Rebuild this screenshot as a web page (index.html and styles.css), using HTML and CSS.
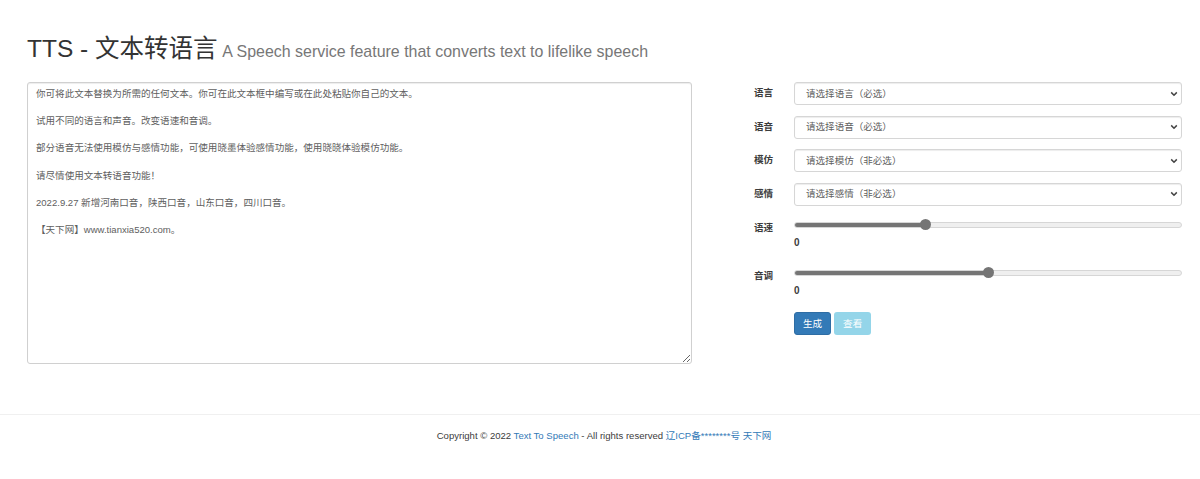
FILE: index.html
```html
<!DOCTYPE html>
<html lang="zh-CN">
<head>
<meta charset="utf-8">
<title>TTS - 文本转语言</title>
<link rel="stylesheet" href="styles.css">
</head>
<body>
<main class="page">
  <h1 class="title">TTS - 文本转语言 <small class="subtitle">A Speech service feature that converts text to lifelike speech</small></h1>
  <div class="columns">
    <textarea class="text-input">你可将此文本替换为所需的任何文本。你可在此文本框中编写或在此处粘贴你自己的文本。

试用不同的语言和声音。改变语速和音调。

部分语音无法使用模仿与感情功能，可使用晓墨体验感情功能，使用晓晓体验模仿功能。

请尽情使用文本转语音功能！

2022.9.27 新增河南口音，陕西口音，山东口音，四川口音。

【天下网】www.tianxia520.com。</textarea>
    <form class="controls">
      <label class="field-label">语言</label>
      <select class="field-select"><option>请选择语言（必选）</option></select>
      <label class="field-label">语音</label>
      <select class="field-select"><option>请选择语音（必选）</option></select>
      <label class="field-label">模仿</label>
      <select class="field-select"><option>请选择模仿（非必选）</option></select>
      <label class="field-label">感情</label>
      <select class="field-select"><option>请选择感情（非必选）</option></select>
      <label class="field-label slider-label">语速</label>
      <div class="slider-cell">
        <input class="slider" type="range" min="-500" max="1000" value="0" style="--fill:33.3%">
        <b class="slider-value">0</b>
      </div>
      <label class="field-label slider-label">音调</label>
      <div class="slider-cell">
        <input class="slider" type="range" min="-500" max="500" value="0" style="--fill:50%">
        <b class="slider-value">0</b>
      </div>
      <div class="actions">
        <button class="btn btn-primary" type="button">生成</button>
        <button class="btn btn-info" type="button">查看</button>
      </div>
    </form>
  </div>
</main>
<footer class="footer">
  <p class="copyright">Copyright © 2022 <a href="#">Text To Speech</a> - All rights reserved <a href="#">辽ICP备********号</a> <a href="#">天下网</a></p>
</footer>
</body>
</html>
```

FILE: styles.css
```css
* { box-sizing: border-box; }
html, body { margin: 0; height: 100%; }
body {
  background: #fff;
  color: #3c3c3c;
  font-family: "Liberation Sans", "Noto Sans CJK SC", sans-serif;
  font-size: 9.55px;
  line-height: 13.6px;
  overflow: hidden;
}
.page { padding: 35px 18px 0 27px; }
.title {
  margin: 0 0 16px;
  font-size: 24.5px;
  line-height: 28px;
  font-weight: 400;
  color: #333;
}
.subtitle { margin-left: -2px; font-size: 15.96px; color: #777; font-weight: 400; }
.columns {
  display: grid;
  grid-template-columns: 665px 1fr;
  align-items: start;
}
.text-input {
  display: block;
  width: 665px;
  height: 282px;
  padding: 4px 8px;
  border: 1px solid #d0d0d0;
  border-radius: 3px;
  box-shadow: inset 0 1px 1px rgba(0,0,0,.075);
  color: #606060;
  font: inherit;
  line-height: 13.6px;
  resize: vertical;
  outline: none;
}
.controls {
  display: grid;
  grid-template-columns: 81px 388px;
  column-gap: 21px;
  row-gap: 10.5px;
  align-items: start;
}
.field-label {
  text-align: right;
  font-weight: 700;
  padding-top: 4px;
  line-height: 13.6px;
}
.slider-label { padding-top: 4.5px; }
.field-select {
  -webkit-appearance: none;
  appearance: none;
  display: block;
  width: 100%;
  height: 23px;
  padding: 0 11px;
  border: 1px solid #d6d6d6;
  border-radius: 3px;
  background: #fff url("data:image/svg+xml,%3Csvg xmlns='http://www.w3.org/2000/svg' width='8' height='6' viewBox='0 0 8 6'%3E%3Cpath d='M1.2 1.4 4 4.2 6.8 1.4' fill='none' stroke='%23444' stroke-width='1.5'/%3E%3C/svg%3E") no-repeat right 3px center;
  box-shadow: inset 0 1px 1px rgba(0,0,0,.075);
  color: #606060;
  font: inherit;
}
.slider-cell { display: flex; flex-direction: column; margin-top: 3px; padding-bottom: 4px; }
.slider {
  -webkit-appearance: none;
  appearance: none;
  display: block;
  width: 100%;
  height: 11px;
  margin: 0 0 6px;
  background: transparent;
}
.slider::-webkit-slider-runnable-track {
  height: 6px;
  border: 1px solid #d6d6d6;
  border-radius: 3px;
  background: linear-gradient(to right, #757575 var(--fill), #efefef var(--fill));
}
.slider::-webkit-slider-thumb {
  -webkit-appearance: none;
  width: 11px;
  height: 11px;
  margin-top: -3.5px;
  border-radius: 50%;
  background: #757575;
}
.slider-value { font-size: 10px; line-height: 13.6px; }
.actions {
  grid-column: 2;
  display: flex;
  gap: 3px;
}
.btn {
  height: 23px;
  padding: 0 8px;
  border: 1px solid transparent;
  border-radius: 3px;
  color: #fff;
  font: inherit;
}
.btn-primary { background: #337ab7; border-color: #2e6da4; }
.btn-info { background: #5bc0de; opacity: .65; }
.footer {
  margin-top: 50px;
  border-top: 1px solid #f0f0f0;
  padding-top: 14px;
  text-align: center;
}
.copyright { margin: 0; padding-left: 8px; }
.copyright a { color: #337ab7; text-decoration: none; }
```
